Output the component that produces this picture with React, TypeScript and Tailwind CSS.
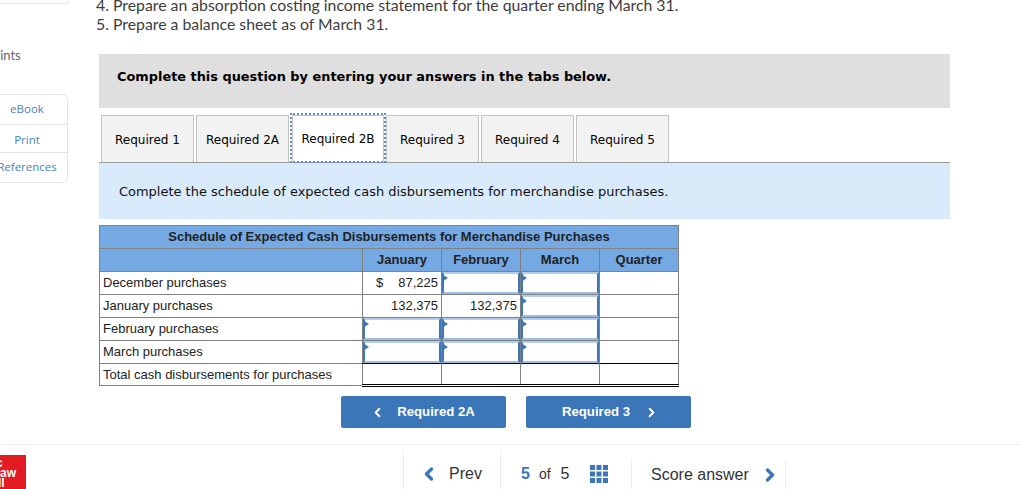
import React from 'react';
import { ChevronLeft, ChevronRight } from 'lucide-react';

const tabs = ['Required 1', 'Required 2A', 'Required 2B', 'Required 3', 'Required 4', 'Required 5'];

const InputCell = () => (
  <td className="border border-[#808080] p-0 h-[23px]">
    <div className="relative h-[22px] border-2 border-l-[#3f76b5] border-r-[#3f76b5] border-t-[#b5cde9] border-b-[#9dbde3] bg-white">
      <span className="absolute -left-[2px] top-0 w-0 h-0 border-y-[4px] border-y-transparent border-l-[6px] border-l-[#3f76b5]" />
    </div>
  </td>
);

const Cell = ({ children, className = '' }: { children?: React.ReactNode; className?: string }) => (
  <td className={`border border-[#808080] px-[3px] pb-[2px] h-[23px] text-right ${className}`}>{children}</td>
);

const App = () => {
  return (
    <div className="w-[1021px] h-[489px] overflow-hidden bg-white flex flex-col font-['Lato',sans-serif]">
      <div className="flex h-[444px] shrink-0">
        {/* sidebar, cut off by the left edge */}
        <div className="w-[99px] shrink-0 overflow-hidden relative">
          <div className="-ml-[10px] w-[78px] h-[3px] -mt-px border border-[#e5e5e5] rounded-b-md box-content" />
          <div className="-ml-[36px] mt-[42px] h-[18px] text-[13px] leading-[18px] text-[#666] whitespace-nowrap font-['Lato',sans-serif]">0.5 points</div>
          <div className="-ml-[10px] mt-[30px] w-[78px] h-[89px] border border-[#e5e5e5] rounded-md flex flex-col text-[11.5px] text-[#4a7fc2] font-['Open_Sans',sans-serif]">
            <div className="h-[30px] flex items-center justify-center border-b border-[#e5e5e5] pr-[4px] pb-[2px]">eBook</div>
            <div className="h-[29px] flex items-center justify-center border-b border-[#e5e5e5] pr-[4px] pt-[2px]">Print</div>
            <div className="h-[29px] flex items-center justify-center pr-[4px] pb-[2px]">References</div>
          </div>
        </div>

        <div className="flex-1 min-w-0">
          <div className="-mt-[5px] -ml-[3px] text-[15.8px] leading-[19px] text-[#3d3d3d] whitespace-nowrap">
            <p>4. Prepare an absorption costing income statement for the quarter ending March 31.</p>
            <p>5. Prepare a balance sheet as of March 31.</p>
          </div>

          <div className="mt-[21px] w-[851px] h-[54px] bg-[#dfdfdf] flex items-center pl-[18px] pb-[8px] font-['DejaVu_Sans',sans-serif] font-bold text-[12.9px] text-black">
            Complete this question by entering your answers in the tabs below.
          </div>

          <div className="mt-[7px] w-[851px] h-[48px] border-b border-[#999] flex pl-[2px] font-['DejaVu_Sans',sans-serif] text-[12px] text-black">
            {tabs.map((t) =>
              t === 'Required 2B' ? (
                <div key={t} className="w-[96px] h-[50px] -mt-[2px] -ml-px border-2 border-dotted border-[#5b8ecb] shrink-0 relative">
                  <div className="h-full border-t border-x border-[#c4c4c4] bg-white flex items-center justify-center pt-[1px]">{t}</div>
                </div>
              ) : (
                <div key={t} className="w-[93px] h-[47px] mr-[2px] border border-b-0 border-[#c4c4c4] bg-[#f2f2f2] flex items-center justify-center shrink-0 pt-[2px]">
                  {t}
                </div>
              )
            )}
          </div>

          <div className="w-[851px] h-[56px] bg-[#d9ebfa] flex items-center pl-[20px] pt-[2px] font-['DejaVu_Sans',sans-serif] text-[12.98px] text-[#111]">
            Complete the schedule of expected cash disbursements for merchandise purchases.
          </div>

          <table className="mt-[6px] w-[579px] table-fixed border-collapse font-['Liberation_Sans',sans-serif] text-[13px] text-[#222] leading-none">
            <colgroup>
              <col className="w-[263px]" />
              <col className="w-[79px]" />
              <col className="w-[79px]" />
              <col className="w-[79px]" />
              <col className="w-[79px]" />
            </colgroup>
            <thead>
              <tr className="bg-[#75a9e4] font-bold">
                <th colSpan={5} className="border border-[#808080] h-[23px] pb-[2px] text-center text-[#222]">
                  Schedule of Expected Cash Disbursements for Merchandise Purchases
                </th>
              </tr>
              <tr className="bg-[#75a9e4] font-bold">
                <th className="border border-[#808080] h-[23px]" />
                <th className="border border-[#808080] pb-[2px]">January</th>
                <th className="border border-[#808080] pb-[2px]">February</th>
                <th className="border border-[#808080] pb-[2px]">March</th>
                <th className="border border-[#808080] pb-[2px]">Quarter</th>
              </tr>
            </thead>
            <tbody>
              <tr>
                <Cell className="!text-left">December purchases</Cell>
                <Cell>
                  <div className="flex justify-between pl-[10px]">
                    <span>$</span>
                    <span>87,225</span>
                  </div>
                </Cell>
                <InputCell />
                <InputCell />
                <Cell />
              </tr>
              <tr>
                <Cell className="!text-left">January purchases</Cell>
                <Cell>132,375</Cell>
                <Cell>132,375</Cell>
                <InputCell />
                <Cell />
              </tr>
              <tr>
                <Cell className="!text-left">February purchases</Cell>
                <InputCell />
                <InputCell />
                <InputCell />
                <Cell />
              </tr>
              <tr>
                <Cell className="!text-left">March purchases</Cell>
                <InputCell />
                <InputCell />
                <InputCell />
                <Cell />
              </tr>
              <tr>
                <Cell className="!text-left !h-[22px] !pb-0">Total cash disbursements for purchases</Cell>
                <Cell className="!h-[22px] border-t-black border-b-[3px] border-b-black border-double" />
                <Cell className="!h-[22px] border-t-black border-b-[3px] border-b-black border-double" />
                <Cell className="!h-[22px] border-t-black border-b-[3px] border-b-black border-double" />
                <Cell className="!h-[22px] border-t-black border-b-[3px] border-b-black border-double" />
              </tr>
            </tbody>
          </table>

          <div className="mt-[9px] ml-[242px] flex gap-[20px] font-['Liberation_Sans',sans-serif] font-bold text-[13.2px] text-white">
            <button className="w-[165px] h-[32px] rounded-[2px] bg-[#3b76b9] flex items-center justify-center gap-[12px] pr-[2px]">
              <ChevronLeft size={15} strokeWidth={3} />
              Required 2A
            </button>
            <button className="w-[165px] h-[32px] rounded-[2px] bg-[#3b76b9] flex items-center justify-center gap-[14px] pl-[4px]">
              Required 3
              <ChevronRight size={15} strokeWidth={3} />
            </button>
          </div>
        </div>
      </div>

      {/* footer */}
      <div className="flex-1 border-t border-[#eeeeee] flex relative">
        <div className="w-[403px] shrink-0 overflow-hidden pt-[10px]">
          <div className="w-[26px] h-[34px] bg-[#e31b23] overflow-hidden">
            <div className="-ml-[14px] pt-[3px] w-[40px] text-[12px] leading-[10px] font-bold text-white text-left font-['Liberation_Sans',sans-serif]">
              <div>Mc</div>
              <div>Graw</div>
              <div>Hill</div>
              <div className="text-[5px] leading-[6px] font-normal">Education</div>
            </div>
          </div>
        </div>
        <div className="mt-[5px] flex items-start h-[40px] font-['Liberation_Sans',sans-serif] text-[16px] text-[#333]">
          <div className="w-[98px] h-full border-x border-[#eeeeee] flex items-center pl-[15px] gap-[10px] pt-[8px]">
            <ChevronLeft size={20} strokeWidth={4} className="text-[#3b76b9]" />
            <span>Prev</span>
          </div>
          <div className="w-[130px] h-full flex items-center pl-[20px] pt-[8px]">
            <span className="font-bold text-[#3b76b9]">5</span>
            <span className="ml-[9px] text-[14px]">of</span>
            <span className="ml-[10px]">5</span>
            <svg className="ml-[20px]" width="18" height="18" viewBox="0 0 18 18" fill="#3b76b9">
              {[0, 6.5, 13].flatMap((y) => [0, 6.5, 13].map((x) => (
                <rect key={`${x}-${y}`} x={x} y={y} width="5" height="5" />
              )))}
            </svg>
          </div>
          <div className="w-[155px] h-[31px] mt-[9px] border-x border-[#eeeeee] flex items-center pl-[19px] gap-[11px] whitespace-nowrap">
            <span>Score answer</span>
            <ChevronRight size={20} strokeWidth={4} className="text-[#3b76b9] shrink-0" />
          </div>
        </div>
      </div>
    </div>
  );
};

export default App;
